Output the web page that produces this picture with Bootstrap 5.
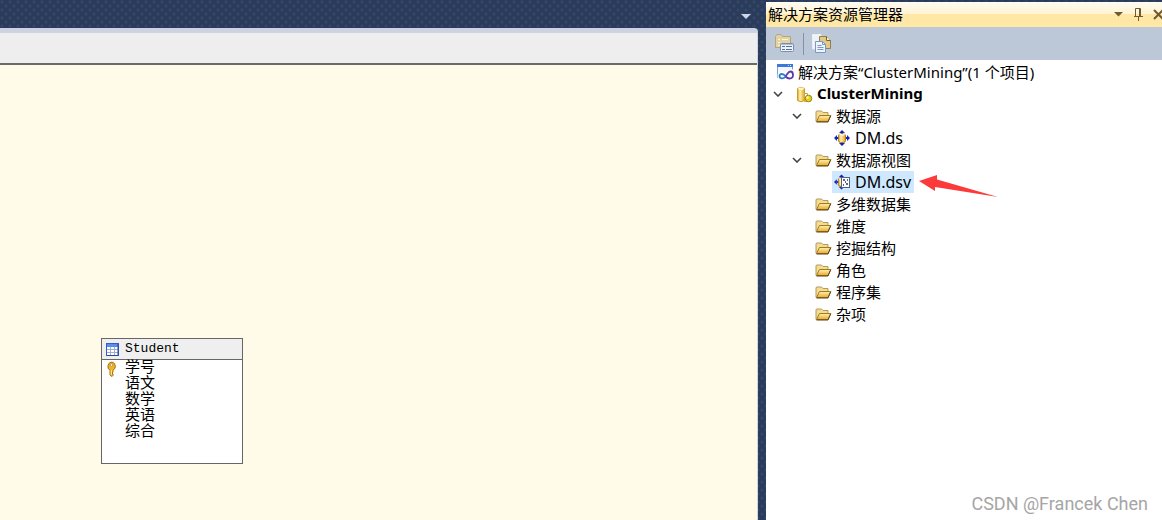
<!DOCTYPE html>
<html lang="zh-CN">
<head>
<meta charset="utf-8">
<meta name="viewport" content="width=device-width, initial-scale=1">
<title>ClusterMining</title>
<link href="https://cdn.jsdelivr.net/npm/bootstrap@5.3.0/dist/css/bootstrap.min.css" rel="stylesheet">
<style>
body{font-family:"Noto Sans","Noto Sans CJK SC",sans-serif;font-size:15px;line-height:22px;color:#000;
 background-color:#2b3c5b;background-image:radial-gradient(circle at 2px 2px,#32476a 1px,transparent 2px),radial-gradient(circle at 6px 6px,#32476a 1px,transparent 2px);background-size:8px 8px}
svg{display:block;flex:none}
.editor{min-width:0}
.tabs-strip{height:28px;padding-right:4px}
.doc{background:#cdd3e2;border-top-right-radius:4px;padding:5px 1px 0 0}
.doc-bar{height:32px;background:#eee;border-bottom:2px solid #6b6b6b}
.canvas{background:#fffbe8}
.entity{left:101px;top:273px;width:142px;height:126px;border:1px solid #666;background:#fff;font-family:"Liberation Mono","Noto Sans CJK SC",monospace}
.entity-head{height:21px;background:#efeff0;border-bottom:1px solid #666;padding-left:4px;gap:6px;font-size:13px}
.entity ul{padding-top:1px}
.entity li{height:16px;line-height:16px;padding-left:23px}
.explorer{width:396px;margin:2px 0 0 8px;background:#fff}
.panel-title{height:25px;padding-left:2px;background:linear-gradient(#fffcf3,#fff3d0 50%,#ffe8a6 50%,#ffe8a6)}
.panel-title h1{font-size:15px;line-height:25px;font-weight:400}
.panel-actions{margin-right:-6px}
.tool{border:0;background:none;padding:0;display:block}
.panel-title .tool{width:20px;height:20px}
.panel-tools{height:33px;background:#bcc7d8;padding-left:9px;gap:8px}
.vline{width:1px;height:22px;background:#8591a5}
.tree{padding-top:1px}
.node{height:22px;white-space:nowrap;gap:4px}
.node strong{line-height:20px;padding-bottom:2px}
.twist{width:19px}
.lv0{padding-left:11px}
.lv1{padding-left:7px}
.lv2{padding-left:26px}
.lv2.leaf{padding-left:49px}
.lv3{padding-left:66px;font-size:16px}
.pick{height:22px;padding:0 3px 0 2px;gap:5px}
.pick.on{background:#cde8ff}
.pointer{left:100%;top:3px;margin-left:4px}
.watermark{right:14px;bottom:4px;font-family:Roboto,sans-serif;font-size:18px;line-height:24px;color:#a5a5a5}
</style>
</head>
<body>
<svg width="0" height="0" class="position-absolute" aria-hidden="true">
<defs>
<linearGradient id="gold" x2="0" y2="1"><stop stop-color="#fff2ae"/><stop offset="1" stop-color="#e9a92c"/></linearGradient>
<linearGradient id="cyl"><stop stop-color="#d99a1c"/><stop offset=".35" stop-color="#fff3b0"/><stop offset="1" stop-color="#e2a51c"/></linearGradient>
<symbol id="folder" viewBox="0 0 16 14"><path d="M.5 12.500V2.500L1.500 2H6l1.500 1.500h5V6" fill="#f5dc8e" stroke="#b09a62"/><path d="M1 12.500L4 6.500H15.500L12.500 12.500Z" fill="url(#gold)" stroke="#a07a28"/><path d="M1 13h11.500L15 7" fill="none" stroke="#5c430f"/></symbol>
<symbol id="chev" viewBox="0 0 10 6"><path d="M1 1l4 4 4-4" fill="none" stroke="#444" stroke-width="1.600"/></symbol>
<symbol id="src" viewBox="0 0 16 16"><path d="M8 0l3 3H5zM8 16l3-3H5zM0 8l3-3v6zM16 8l-3-3v6z" fill="#1a1fc4"/><path d="M3 7h10v2H3zM7 2h2v12H7z" fill="#1a1fc4"/><rect x="4.500" y="4" width="7" height="8.500" rx="2" fill="url(#cyl)" stroke="#a87c20"/><ellipse cx="8" cy="4.800" rx="3" ry="1" fill="#fff4bd"/></symbol>
</defs>
</svg>

<div class="d-flex min-vh-100 overflow-hidden position-relative">
 <main class="editor d-flex flex-column flex-grow-1">
  <div class="tabs-strip d-flex justify-content-end align-items-center">
   <button class="tool pt-1" aria-label="窗口列表"><svg width="16" height="10" viewBox="0 0 16 10"><path d="M3 3h10l-5 5z" fill="#ced4e3"/></svg></button>
  </div>
  <div class="doc d-flex flex-column flex-grow-1">
   <div class="doc-bar"></div>
   <div class="canvas position-relative flex-grow-1">
    <section class="entity position-absolute">
     <div class="entity-head d-flex align-items-center">
      <svg width="13" height="13" viewBox="0 0 13 13"><rect x=".5" y=".5" width="12" height="12" fill="#fff" stroke="#315dc4"/><path d="M1 1h11v3H1z" fill="#5c8cf0"/><path d="M4.500 4v8M8.500 4v8M1 6.500h11M1 9.500h11" stroke="#9fb0cf"/><path d="M12 1v11.500H1" fill="none" stroke="#2446a0"/></svg>
      <span>Student</span>
     </div>
     <ul class="list-unstyled mb-0">
      <li class="position-relative"><svg class="position-absolute start-0 top-0 ms-1" width="12" height="16" viewBox="0 0 12 16"><path d="M6 1a4.500 4.500 0 0 0-2 8.300V14l2 1.500 1-1v-1.500l-1-1 1-1V9.300A4.500 4.500 0 0 0 6 1z" fill="#eeb52c" stroke="#a96f0c"/><circle cx="5.500" cy="4" r="1.300" fill="#fff" stroke="#a96f0c" stroke-width=".6"/><path d="M5.300 9v5" stroke="#fff0a0"/></svg>学号</li>
      <li>语文</li><li>数学</li><li>英语</li><li>综合</li>
     </ul>
    </section>
   </div>
  </div>
 </main>

 <aside class="explorer flex-shrink-0">
  <header class="panel-title d-flex align-items-center">
   <h1 class="mb-0 flex-grow-1">解决方案资源管理器</h1>
   <div class="panel-actions d-flex">
   <button class="tool" aria-label="窗口位置"><svg width="20" height="20" viewBox="0 0 20 20"><path d="M6 7h9l-4.500 4.500z" fill="#705a33"/></svg></button>
   <button class="tool" aria-label="自动隐藏"><svg width="20" height="20" viewBox="0 0 20 20"><path d="M7.500 11V3.500h5V11M11.500 3v8M6 11.500h9M10.500 11v5" fill="none" stroke="#705a33"/></svg></button>
   <button class="tool" aria-label="关闭"><svg width="20" height="20" viewBox="0 0 20 20"><path d="M6 5l9 9M15 5l-9 9" stroke="#705a33" stroke-width="2"/></svg></button>
   </div>
  </header>
  <div class="panel-tools d-flex align-items-center">
   <button class="tool" aria-label="属性"><svg width="20" height="20" viewBox="0 0 20 20"><path d="M.5 13.500V2.500L2 .5h4l1.500 2h8v11z" fill="#e3d3a2" stroke="#b3a57c"/><path d="M3 5.500h2M3 8.500h2M3 11.500h2M7 5.500h6" stroke="#fff6d8"/><rect x="5.500" y="9.500" width="13" height="8" rx="1" fill="#eef3fa" stroke="#7890b0"/><path d="M6 10h12v1H6z" fill="#a9bdd8"/><path d="M7 12.500h3M11 12.500h6M7 15.500h3M11 15.500h6" stroke="#57719a"/></svg></button>
   <span class="vline"></span>
   <button class="tool" aria-label="显示所有文件"><svg width="20" height="20" viewBox="0 0 20 20"><path d="M.5 14.500V.5h8v14z" fill="#eef1f6" stroke="#fff" stroke-width="2" stroke-dasharray="1 1"/><path d="M7.500 14.500V2.500h7l4 4v8z" fill="#e3c983" stroke="#8f804f"/><path d="M14.500 2.500v4h4" fill="#fff0bc" stroke="#6e633e"/><path d="M3.500 18.500V7.500h7l3 3v8z" fill="#edf4ff" stroke="#7a97c6"/><path d="M10.500 7.500v3h3M5.500 11.500h4M5.500 13.500h6M5.500 15.500h6" fill="none" stroke="#7896c8"/></svg></button>
  </div>
  <div class="tree">
   <div class="node lv0 d-flex align-items-center"><svg width="17" height="16" viewBox="0 0 17 16"><rect x=".5" y=".5" width="15" height="13" fill="#f3f7fd" stroke="#7d9fd4"/><path d="M0 0h16v3H0z" fill="#3979d9"/><path d="M11 1.500h4" stroke="#c7ddff" stroke-dasharray="1 1"/><path d="M8.500 12.500C5.500 8 2.500 9.500 2.500 12s3.500 3.500 6 0 3-5 5-5 2.500 1.500 2.500 3.500-1.500 4-3.500 4-2.500-1-4-2" fill="none" stroke="#fff" stroke-width="4"/><path d="M8.500 12.500C6.500 9 2.500 9.500 2.500 12s3.500 3.500 6 .5" fill="none" stroke="#2c7fc4" stroke-width="1.800"/><path d="M8.500 12.500c2-3 3-5 5-5s2.500 1.500 2.500 3.500-1.500 3.500-3.500 3.500-2.500-.5-4-2" fill="none" stroke="#5b3da8" stroke-width="1.800"/></svg><span>解决方案“ClusterMining”(1 个项目)</span></div>
   <div class="node lv1 d-flex align-items-center"><span class="twist"><svg width="10" height="6"><use href="#chev"/></svg></span><svg width="17" height="17" viewBox="0 0 17 17"><path d="M1.500 2.500Q5 0 8.500 2.500v12Q5 17 1.500 14.500z" fill="url(#cyl)" stroke="#d09c28"/><ellipse cx="5" cy="2.800" rx="3" ry="1.200" fill="#fff6c9"/><path d="M8.500 15.500v-8h3v8z" fill="#fff" stroke="#c9a24a"/><circle cx="12.500" cy="12.500" r="3.300" fill="#e5cf22" stroke="#99890f"/><circle cx="11.500" cy="11.500" r="1.200" fill="#fff7a2"/></svg><strong>ClusterMining</strong></div>
   <div class="node lv2 d-flex align-items-center"><span class="twist"><svg width="10" height="6"><use href="#chev"/></svg></span><svg width="17" height="14"><use href="#folder"/></svg><span>数据源</span></div>
   <div class="node lv3 d-flex align-items-center"><div class="pick d-flex align-items-center"><svg width="16" height="16"><use href="#src"/></svg><span>DM.ds</span></div></div>
   <div class="node lv2 d-flex align-items-center"><span class="twist"><svg width="10" height="6"><use href="#chev"/></svg></span><svg width="17" height="14"><use href="#folder"/></svg><span>数据源视图</span></div>
   <div class="node lv3 d-flex align-items-center"><div class="pick on position-relative d-flex align-items-center"><svg width="16" height="16" viewBox="0 0 16 16"><use href="#src" width="15" height="16"/><rect x="7.500" y="3.500" width="8" height="10" fill="#fff" stroke="#53617a"/><path d="M9 5h2v2H9zM12 9h2v2h-2zM13 5h1v2h-1zM9 10h1v2H9zM11 7h1v2h-1z" fill="#536991"/></svg><span>DM.dsv</span>
    <svg class="pointer position-absolute" width="81" height="24" viewBox="0 0 81 24" aria-hidden="true"><path d="M1 7L19 1V5.500L80 23 17 13V17z" fill="#fc3a3a"/></svg></div></div>
   <div class="node lv2 leaf d-flex align-items-center"><svg width="17" height="14"><use href="#folder"/></svg><span>多维数据集</span></div>
   <div class="node lv2 leaf d-flex align-items-center"><svg width="17" height="14"><use href="#folder"/></svg><span>维度</span></div>
   <div class="node lv2 leaf d-flex align-items-center"><svg width="17" height="14"><use href="#folder"/></svg><span>挖掘结构</span></div>
   <div class="node lv2 leaf d-flex align-items-center"><svg width="17" height="14"><use href="#folder"/></svg><span>角色</span></div>
   <div class="node lv2 leaf d-flex align-items-center"><svg width="17" height="14"><use href="#folder"/></svg><span>程序集</span></div>
   <div class="node lv2 leaf d-flex align-items-center"><svg width="17" height="14"><use href="#folder"/></svg><span>杂项</span></div>
  </div>
 </aside>
 <div class="watermark position-absolute">CSDN @Francek Chen</div>
</div>
<script src="https://cdn.jsdelivr.net/npm/bootstrap@5.3.0/dist/js/bootstrap.bundle.min.js"></script>
</body>
</html>
